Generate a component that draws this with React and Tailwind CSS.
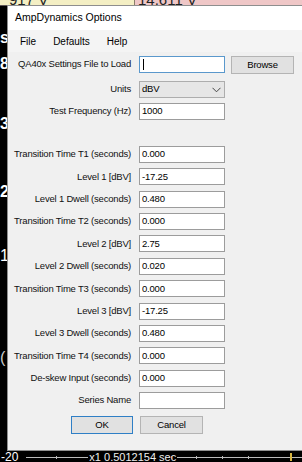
import React from "react";

const ROWS = [
  ["Transition Time T1 (seconds)", "0.000"],
  ["Level 1 [dBV]", "-17.25"],
  ["Level 1 Dwell (seconds)", "0.480"],
  ["Transition Time T2 (seconds)", "0.000"],
  ["Level 2 [dBV]", "2.75"],
  ["Level 2 Dwell (seconds)", "0.020"],
  ["Transition Time T3 (seconds)", "0.000"],
  ["Level 3 [dBV]", "-17.25"],
  ["Level 3 Dwell (seconds)", "0.480"],
  ["Transition Time T4 (seconds)", "0.000"],
  ["De-skew Input (seconds)", "0.000"],
  ["Series Name", ""],
];

function Label({ children }) {
  return (
    <div className="w-[131px] h-[17px] pr-[8px] flex items-center justify-end shrink-0 text-[9.5px] tracking-[-0.2px] text-[#111] whitespace-nowrap">
      {children}
    </div>
  );
}

function TextBox({ value, focused = false }) {
  return (
    <div
      className={
        "w-[86px] h-[17px] bg-white border flex items-center pl-[2px] text-[9.5px] tracking-[-0.2px] text-black " +
        (focused ? "border-[#5a98cc]" : "border-[#9c9c9c]")
      }
    >
      {focused ? <span className="w-px h-[11px] bg-black ml-[1px]" /> : value}
    </div>
  );
}

function Button({ children, primary = false, className = "" }) {
  return (
    <div
      className={
        "h-[18px] flex items-center justify-center bg-[#e1e1e1] text-[9.5px] tracking-[-0.2px] text-black " +
        (primary ? "border-[1.5px] border-[#2f7fc6] " : "border border-[#b4b4b4] ") +
        className
      }
    >
      {children}
    </div>
  );
}

export default function App() {
  return (
    <div className="relative w-[302px] h-[462px] overflow-hidden bg-black font-['Liberation_Sans',Arial,sans-serif]">
      {/* chart behind the dialog */}
      <div className="flex flex-col h-full">
        <div className="h-[6px] flex border-b border-[#5e5656] overflow-hidden text-[15px] leading-none text-[#222]">
          <div className="w-[134px] bg-[#f4efc4] relative">
            <span className="absolute left-[9px] -top-[8px]">917 V</span>
          </div>
          <div className="w-px bg-[#8a7d6a]" />
          <div className="flex-1 bg-[#efc7c7] relative">
            <span className="absolute left-[3px] -top-[8px]">14.611 V</span>
          </div>
        </div>
        <div className="flex-1 flex flex-col w-[7px] text-white text-[16px] leading-none">
          <span className="mt-[24px] font-bold">s</span>
          <span className="mt-[10px] font-bold">8</span>
          <span className="mt-[44px] font-bold">3</span>
          <span className="mt-[52px] font-bold">2</span>
          <span className="mt-[48px]">1</span>
          <span className="mt-[86px] text-[#ccc]">(</span>
        </div>
        <div className="h-[12px] flex items-start overflow-hidden text-white text-[12px] leading-none">
          <span className="ml-[1px] mt-[1px]">-20</span>
          <div className="ml-[8px] mt-[6px] flex-1 relative h-[6px]">
            <div className="absolute left-0 right-0 top-[1px] h-px bg-[#bbb]" />
            <div className="absolute left-[62px] -top-[4px] bg-black px-[1px] text-[11px] text-[#eee]">x1 0.5012154 sec</div>
            <div className="absolute left-[30px] top-0 w-px h-[3px] bg-[#bbb]" />
            <div className="absolute left-[145px] top-0 w-px h-[3px] bg-[#bbb]" />
            <div className="absolute left-[170px] top-0 w-px h-[3px] bg-[#bbb]" />
            <div className="absolute left-[196px] top-0 w-px h-[3px] bg-[#bbb]" />
            <div className="absolute left-[222px] top-0 w-px h-[3px] bg-[#bbb]" />
            <div className="absolute left-[264px] -top-[3px] w-[2px] h-[8px] bg-[#d8b640]" />
          </div>
        </div>
      </div>

      {/* dialog window */}
      <div className="absolute left-[7px] top-[5px] w-[310px] h-[446px] border border-[#8e8e8e] bg-[#f0f0f0] flex flex-col">
        <div className="h-[24px] bg-white flex items-center pl-[7px] text-[10.5px] text-black">
          AmpDynamics Options
        </div>
        <div className="h-[22px] bg-[#f4f4f4] flex items-center pl-[4px] gap-[1px] text-[10px] text-black">
          <span className="px-[8px]">File</span>
          <span className="px-[8px]">Defaults</span>
          <span className="px-[8px]">Help</span>
        </div>

        <div className="flex flex-col pt-[4px]">
          <div className="flex items-start">
            <Label>QA40x Settings File to Load</Label>
            <TextBox focused />
            <Button className="ml-[6px] w-[63px]">Browse</Button>
          </div>
          <div className="flex items-start mt-[7px]">
            <Label>Units</Label>
            <div className="w-[86px] h-[17px] bg-[#e6e6e6] border border-[#adadad] flex items-center justify-between pl-[2px] pr-[3px] text-[9.5px] tracking-[-0.2px] text-black">
              <span>dBV</span>
              <svg width="9" height="6" viewBox="0 0 9 6">
                <polyline points="0.5,0.8 4.5,4.8 8.5,0.8" fill="none" stroke="#444" strokeWidth="1" />
              </svg>
            </div>
          </div>
          <div className="flex items-start mt-[5px]">
            <Label>Test Frequency (Hz)</Label>
            <TextBox value="1000" />
          </div>

          <div className="flex flex-col gap-[5.36px] mt-[26px]">
            {ROWS.map(([label, value]) => (
              <div key={label} className="flex items-start">
                <Label>{label}</Label>
                <TextBox value={value} />
              </div>
            ))}
          </div>

          <div className="flex mt-[7px] ml-[63px] gap-[7px]">
            <Button primary className="w-[62px]">OK</Button>
            <Button className="w-[63px]">Cancel</Button>
          </div>
        </div>
      </div>
    </div>
  );
}
